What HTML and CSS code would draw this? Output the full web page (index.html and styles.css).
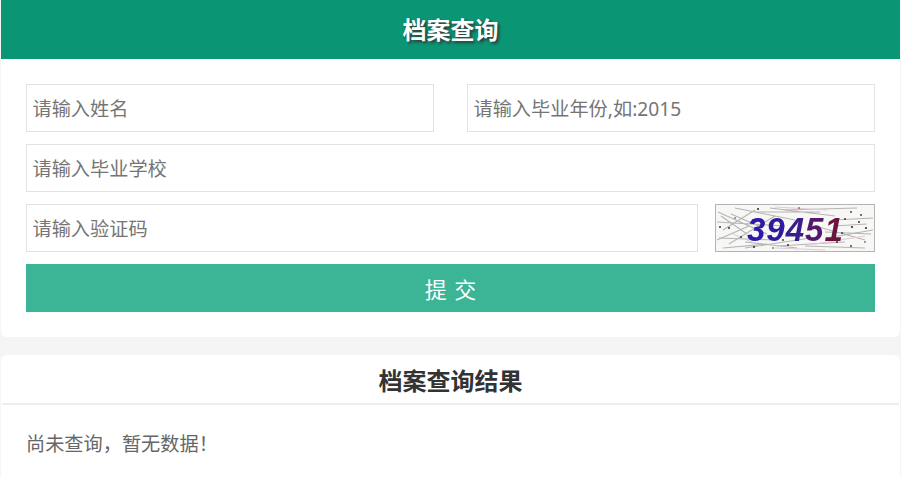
FILE: index.html
```html
<!DOCTYPE html>
<html lang="zh-CN">
<head>
<meta charset="utf-8">
<title>档案查询</title>
<link rel="stylesheet" href="styles.css">
</head>
<body>
<main class="page">
  <section class="card">
    <h1 class="banner">档案查询</h1>
    <form class="form">
      <div class="row split">
        <input class="field" type="text" placeholder="请输入姓名">
        <input class="field" type="text" placeholder="请输入毕业年份,如:2015">
      </div>
      <div class="row">
        <input class="field" type="text" placeholder="请输入毕业学校">
      </div>
      <div class="row captcha-row">
        <input class="field" type="text" placeholder="请输入验证码">
        <svg class="captcha" viewBox="0 0 160 48" width="160" height="48" aria-label="验证码">
          <rect x="0.5" y="0.5" width="159" height="47" fill="#f7f7f5" stroke="#b4b4b4"/>
          <g class="captcha-noise" fill="none" stroke="#b5b5b5" stroke-width="1.1">
            <path d="M3 8 L52 30 M8 26 L40 6 M14 40 L60 12 M2 18 L70 22 M20 4 L80 16 M30 44 L95 34 M2 36 L34 22 M16 10 L48 24"/>
            <path d="M40 8 L105 8 M55 4 L120 12 M90 42 L150 44 M110 28 L156 30 M120 16 L158 14 M100 22 L150 36 M112 34 L158 26"/>
            <path d="M4 34 L60 36 M6 12 L32 30 M62 42 L130 38 M30 38 L82 44 M70 6 L142 4 M8 44 L52 40 M118 22 L152 20"/>
          </g>
          <g fill="none" stroke="#e3c9d6" stroke-width="1">
            <path d="M60 3 L112 6 M100 40 L150 32 M60 44 L110 46 M18 30 L46 42"/>
          </g>
          <g fill="#333">
            <circle cx="43" cy="5" r="1.1"/><circle cx="84" cy="4" r="1" fill="#c25a7a"/><circle cx="5" cy="23" r="1"/>
            <circle cx="14" cy="24" r="1"/><circle cx="38" cy="16" r=".9"/><circle cx="39" cy="43" r="1.1"/><circle cx="73" cy="41" r="1"/>
            <circle cx="130" cy="15" r="1"/><circle cx="144" cy="18" r="1"/><circle cx="151" cy="24" r="1.1"/>
            <circle cx="137" cy="23" r="1.1"/><circle cx="122" cy="38" r="1"/><circle cx="136" cy="42" r=".9"/>
            <circle cx="26" cy="33" r=".9"/><circle cx="68" cy="36" r=".9"/><circle cx="146" cy="11" r=".9"/>
            <circle cx="136" cy="8" r=".9"/><circle cx="127" cy="29" r=".9"/><circle cx="20" cy="14" r=".8"/>
            <circle cx="150" cy="38" r=".8"/><circle cx="58" cy="44" r=".8"/>
          </g>
          <text class="captcha-text" x="32" y="37"><tspan fill="#2e1aa6">3</tspan><tspan fill="#2f1b9c">9</tspan><tspan fill="#3a1c8c">4</tspan><tspan fill="#54186c">5</tspan><tspan fill="#6b1440">1</tspan></text>
        </svg>
      </div>
      <button class="submit" type="button">提 交</button>
    </form>
  </section>
  <section class="card result">
    <h2 class="result-title">档案查询结果</h2>
    <p class="result-body">尚未查询，暂无数据！</p>
  </section>
</main>
</body>
</html>
```

FILE: styles.css
```css
* { box-sizing: border-box; }
html, body { margin: 0; padding: 0; height: 100%; }
body {
  background: #f5f5f5;
  font-family: "Noto Sans", "Noto Sans CJK SC", sans-serif;
  overflow: hidden;
}
.page { padding: 0 1px; }
.card {
  background: #fff;
  border-radius: 0 0 6px 6px;
  overflow: hidden;
  margin-bottom: 18px;
}
.banner {
  margin: 0;
  height: 59px;
  line-height: 59px;
  text-align: center;
  font-size: 24px;
  font-weight: 700;
  color: #fff;
  background: #0a9675;
  text-shadow: 2px 2px 3px #333;
}
.form {
  padding: 25px;
  display: flex;
  flex-direction: column;
  gap: 12px;
}
.row { display: flex; height: 48px; }
.split { gap: 33px; }
.captcha-row { gap: 17px; }
.field {
  flex: 1 1 0;
  min-width: 0;
  height: 48px;
  border: 1px solid #e3e3e3;
  background: #fff;
  padding: 1px 5.5px 0;
  font: inherit;
  font-size: 19.2px;
  color: #333;
  outline: none;
  border-radius: 0;
}
.field::placeholder { color: #757575; opacity: 1; }
.captcha { flex: none; display: block; filter: blur(0.35px); }
.captcha-text {
  font-family: "Liberation Sans", sans-serif;
  font-size: 33px;
  font-style: italic;
  font-weight: 700;
  letter-spacing: 1px;
}
.submit {
  display: block;
  width: 100%;
  height: 48px;
  border: 0;
  padding: 0;
  background: #3cb496;
  color: #fff;
  font: inherit;
  font-size: 22px;
  letter-spacing: 1px;
  text-indent: 1px;
}
.result { border-radius: 6px 6px 0 0; margin-bottom: 0; height: 122px; }
.result-title {
  margin: 0 1px;
  height: 50px;
  padding-top: 4px;
  line-height: 44px;
  text-align: center;
  font-size: 24px;
  font-weight: 700;
  color: #333;
  border-bottom: 2px solid #eee;
}
.result-body {
  margin: 0;
  padding: 0 25px;
  line-height: 77px;
  font-size: 19.2px;
  color: #666;
}
```
